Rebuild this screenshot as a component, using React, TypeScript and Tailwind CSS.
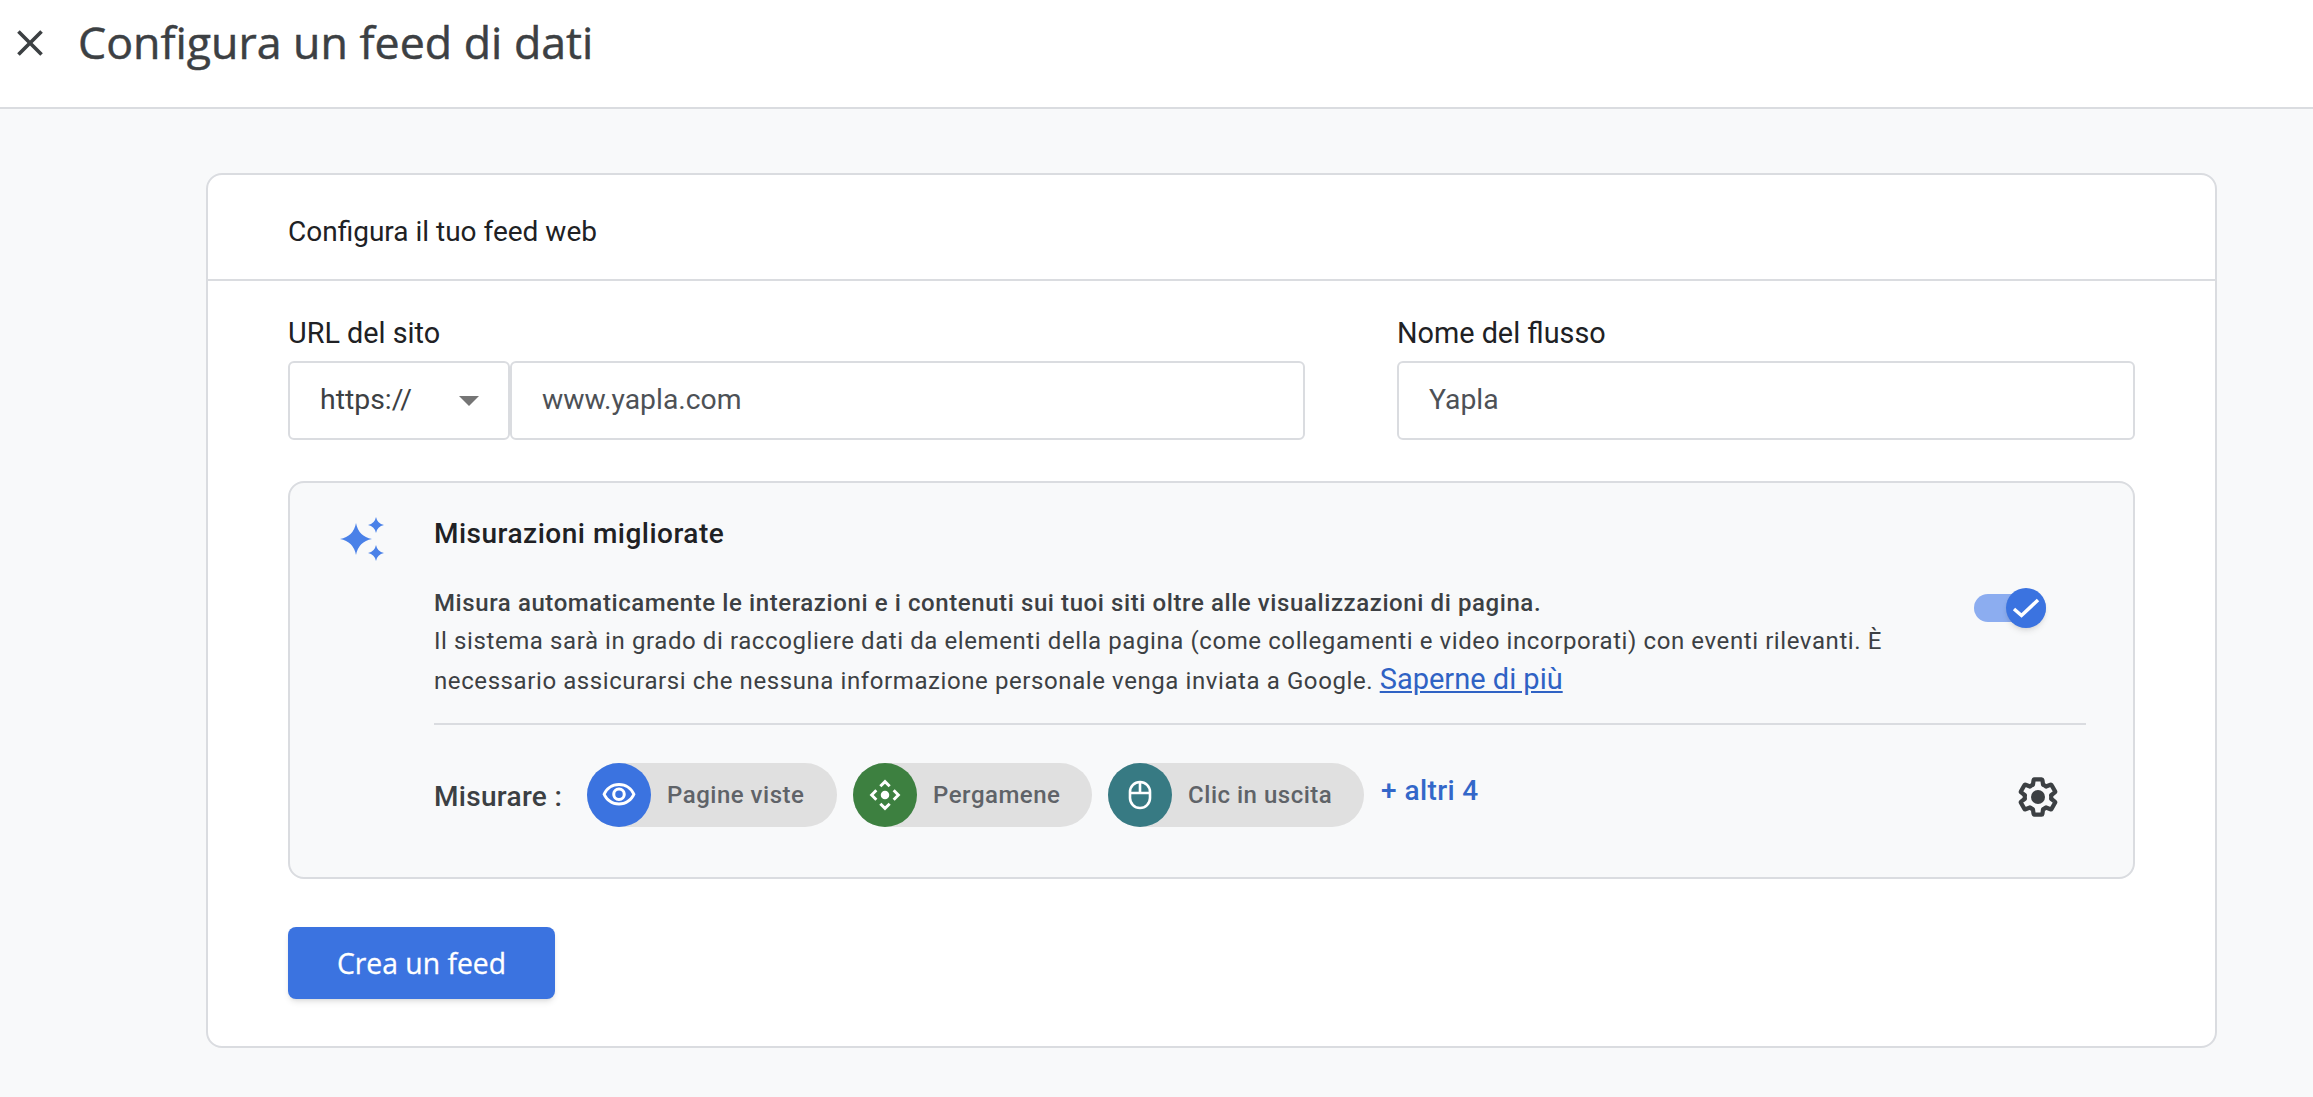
import { MdClose, MdOutlineVisibility } from 'react-icons/md';

const chips = [
  { label: 'Pagine viste', color: 'bg-[#3b73e0]', width: 'w-[250px]', icon: <MdOutlineVisibility size={36} /> },
  { label: 'Pergamene', color: 'bg-[#3d8040]', width: 'w-[239px]', icon: <ScrollIcon /> },
  { label: 'Clic in uscita', color: 'bg-[#377a83]', width: 'w-[256px]', icon: <MouseIcon /> },
];

function ScrollIcon() {
  return (
    <svg width="32" height="34" viewBox="0 0 24 24" fill="none" stroke="currentColor" strokeWidth="2.2">
      <circle cx="12" cy="12" r="3.2" fill="currentColor" stroke="none" />
      <path d="M8.500 5.500 12 2l3.500 3.500M8.500 18.500 12 22l3.500-3.500M5.500 8.500 2 12l3.500 3.500M18.500 8.500 22 12l-3.500 3.500" />
    </svg>
  );
}

function MouseIcon() {
  return (
    <svg width="24" height="30" viewBox="0 0 24 30" fill="none" stroke="currentColor" strokeWidth="2.6">
      <rect x="2" y="2" width="20" height="26" rx="10" />
      <path d="M2 13h20M12 2v11" />
    </svg>
  );
}

function GearIcon() {
  return (
    <svg width="48" height="48" viewBox="0 0 24 24" className="text-[#3c4043]">
      <path
        transform="translate(12 12) scale(0.92) translate(-12 -12)"
        fill="none"
        stroke="currentColor"
        strokeWidth="2.3"
        strokeLinejoin="round"
        d="M19.14 12.94c.04-.3.06-.61.06-.94 0-.32-.02-.64-.07-.94l2.03-1.58c.18-.14.23-.41.12-.61l-1.920-3.320c-.12-.22-.37-.29-.59-.22l-2.390.96c-.5-.38-1.030-.7-1.620-.94l-.36-2.540c-.04-.24-.24-.41-.48-.41h-3.840c-.24 0-.43.17-.47.41l-.36 2.540c-.59.24-1.130.57-1.620.94l-2.390-.96c-.22-.08-.47 0-.59.22L2.740 8.870c-.12.21-.08.47.12.61l2.030 1.580c-.05.3-.09.63-.09.94s.02.64.07.94l-2.030 1.580c-.18.14-.23.41-.12.61l1.920 3.320c.12.22.37.29.59.22l2.390-.96c.5.38 1.030.7 1.620.94l.36 2.540c.05.24.24.41.48.41h3.840c.24 0 .44-.17.47-.41l.36-2.540c.59-.24 1.130-.56 1.620-.94l2.390.96c.22.08.47 0 .59-.22l1.920-3.320c.12-.22.07-.47-.12-.61l-2.010-1.580z"
      />
      <circle cx="12" cy="12" r="3.500" fill="currentColor" />
    </svg>
  );
}

function Sparkle() {
  return (
    <svg width="44" height="44" viewBox="0 0 44 44" fill="#4a81e8">
      <path d="M16 6 Q18.500 19.500 32 22 Q18.500 24.500 16 38 Q13.500 24.500 0 22 Q13.500 19.500 16 6Z" />
      <path d="M36 0 Q37.300 6.700 44 8 Q37.300 9.300 36 16 Q34.700 9.300 28 8 Q34.700 6.700 36 0Z" />
      <path d="M36 28 Q37.300 34.700 44 36 Q37.300 37.300 36 44 Q34.700 37.300 28 36 Q34.700 34.700 36 28Z" />
    </svg>
  );
}

export default function App() {
  return (
    <div className="min-h-[1097px] bg-[#f8f9fa] font-['Roboto',sans-serif] text-[#202124]">
      <header className="h-[109px] bg-white border-b-2 border-[#dadce0] flex items-start">
        <MdClose size={44} className="ml-[8px] mt-[21px] text-[#3c4043]" />
        <h1 className="ml-[26px] mt-[17px] font-['Open_Sans',sans-serif] font-medium text-[44.7px] leading-[50px] text-[#3c4043] [-webkit-text-stroke:0.5px_#3c4043]">
          Configura un feed di dati
        </h1>
      </header>

      <section className="mt-[64px] ml-[206px] w-[2011px] h-[875px] bg-white border-2 border-[#dadce0] rounded-2xl">
        <div className="h-[106px] border-b-2 border-[#dadce0] px-[80px] pt-[9px] flex items-center text-[28px]">
          Configura il tuo feed web
        </div>

        <div className="px-[80px] pt-[36px]">
          <div className="flex gap-[92px]">
            <div className="w-[1017px]">
              <label className="block text-[28.8px] leading-[32px] mb-[12px]">URL del sito</label>
              <div className="flex">
                <div className="w-[222px] h-[79px] bg-white border-2 border-[#dadce0] rounded-md flex items-center justify-between pl-[30px] pr-[29px] text-[28.4px] text-[#3c4043]">
                  https://
                  <span className="w-0 h-0 border-x-[10px] border-x-transparent border-t-[10px] border-t-[#757575]" />
                </div>
                <div className="flex-1 h-[79px] bg-white border-2 border-[#dadce0] rounded-md flex items-center pl-[30px] text-[28.3px] text-[#4d5156]">
                  www.yapla.com
                </div>
              </div>
            </div>
            <div className="flex-1">
              <label className="block text-[28.8px] leading-[32px] mb-[12px]">Nome del flusso</label>
              <div className="h-[79px] bg-white border-2 border-[#dadce0] rounded-md flex items-center pl-[30px] text-[28.3px] text-[#4d5156]">
                Yapla
              </div>
            </div>
          </div>

          <div className="mt-[41px] h-[398px] bg-[#f8f9fa] border-2 border-[#dadce0] rounded-2xl flex pt-[35px]">
            <div className="w-[144px] shrink-0 pl-[50px] -mt-px">
              <Sparkle />
            </div>
            <div className="flex-1 pr-[47px]">
              <h2 className="text-[28px] leading-[32px] font-medium tracking-[0.5px] mb-[35px]">Misurazioni migliorate</h2>
              <div className="flex items-start">
                <p className="w-[1540px] pr-[72px] text-[24px] leading-[40px] tracking-[0.59px] text-[#3c4043]">
                  <strong className="block font-medium leading-[36px]">
                    Misura automaticamente le interazioni e i contenuti sui tuoi siti oltre alle visualizzazioni di pagina.
                  </strong>
                  Il sistema sarà in grado di raccogliere dati da elementi della pagina (come collegamenti e video incorporati) con eventi rilevanti. È necessario assicurarsi che nessuna informazione personale venga inviata a Google.{' '}
                  <a className="text-[29px] leading-none tracking-normal text-[#2f62c4] underline">Saperne di più</a>
                </p>
                <div className="relative w-[72px] h-[28px] mt-[9px] shrink-0 rounded-full bg-[#8cadf0]">
                  <span className="absolute -top-[6px] right-0 w-[40px] h-[40px] rounded-full bg-[#3b73e0] text-white shadow-md flex items-center justify-center">
                    <svg width="28" height="24" viewBox="0 0 28 24" fill="none" stroke="currentColor" strokeWidth="3.5">
                      <path d="M2 13l7.500 6.500L26 4" />
                    </svg>
                  </span>
                </div>
              </div>

              <div className="mt-[22px] pt-[38px] border-t-2 border-[#dadce0] flex items-center">
                <span className="text-[28px] font-medium text-[#3c4043] tracking-[0.3px] mt-[4px] mr-[25px]">Misurare :</span>
                <div className="flex gap-[16px]">
                  {chips.map((chip) => (
                    <div key={chip.label} className={`${chip.width} h-[64px] rounded-full bg-[#e0e0e0] flex items-center`}>
                      <span className={`${chip.color} w-[64px] h-[64px] rounded-full text-white flex items-center justify-center`}>
                        {chip.icon}
                      </span>
                      <span className="ml-[16px] text-[24px] font-medium tracking-[0.5px] text-[#5f6368]">{chip.label}</span>
                    </div>
                  ))}
                </div>
                <span className="ml-[17px] mb-[8px] text-[28px] font-medium tracking-[0.4px] text-[#3367c9]">+ altri 4</span>
                <div className="ml-auto mr-[24px] mt-[4px]">
                  <GearIcon />
                </div>
              </div>
            </div>
          </div>

          <button className="mt-[48px] w-[267px] h-[72px] bg-[#3b73e0] rounded-lg shadow-md text-white text-[28.3px] font-medium font-['Open_Sans',sans-serif] [-webkit-text-stroke:0.3px_#ffffff]">
            Crea un feed
          </button>
        </div>
      </section>
    </div>
  );
}
